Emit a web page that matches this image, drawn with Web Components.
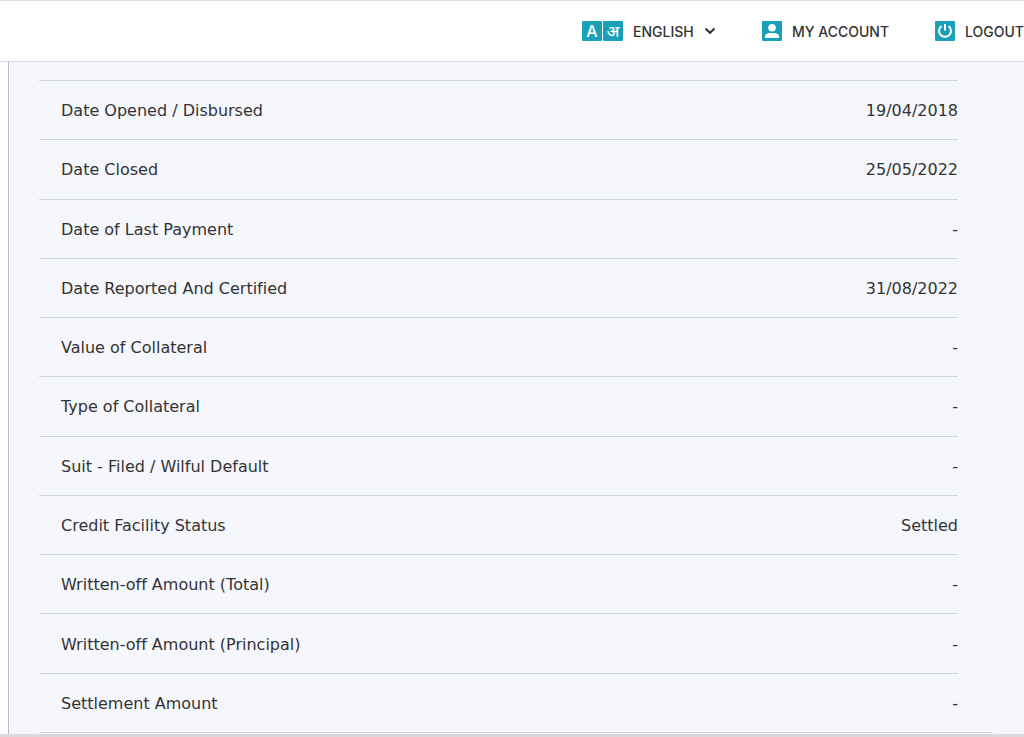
<!DOCTYPE html>
<html lang="en">
<head>
<meta charset="UTF-8">
<meta name="viewport" content="width=device-width, initial-scale=1.0">
<title>Account details</title>
<style>
    body {
        margin: 0;
        background: #fff;
        color: #333;
        font-family: "DejaVu Sans", sans-serif;
        font-size: 16px;
        font-variant-ligatures: none;
    }
</style>
</head>
<body>
<report-page>
    <top-bar slot="header">
        <language-select></language-select>
        <nav-link href="#account" label="MY ACCOUNT">
            <svg slot="icon" viewBox="0 0 20 20" width="20" height="20" aria-hidden="true">
                <rect width="20" height="20" rx="1" fill="#1a9fb8"/>
                <circle cx="10" cy="6.800" r="3.800" fill="#fff"/>
                <path d="M3 17v-1.200c0-2.600 2.500-3.800 4.500-3.800h5c2 0 4.500 1.200 4.500 3.800V17z" fill="#fff"/>
            </svg>
        </nav-link>
        <nav-link href="#logout" label="LOGOUT">
            <svg slot="icon" viewBox="0 0 20 20" width="20" height="20" aria-hidden="true">
                <rect width="20" height="20" rx="1" fill="#1a9fb8"/>
                <path d="M6.500 5a6 6 0 1 0 7 0M10 3v6.500" fill="none" stroke="#fff" stroke-width="2"/>
            </svg>
        </nav-link>
    </top-bar>
    <account-details></account-details>
</report-page>

<script>
class ReportPage extends HTMLElement {
    constructor() {
        super();
        const shadow = this.attachShadow({ mode: 'open' });

        shadow.innerHTML = `
            <style>
                :host {
                    display: flex;
                    flex-direction: column;
                    box-sizing: border-box;
                    min-height: 100vh;
                    border-top: 1px solid #dcdcdc;
                    border-bottom: 3px solid #ddd8dc;
                }

                main {
                    flex: 1;
                    display: flex;
                    margin-left: 8px;
                    border-left: 1px solid #b9bccb;
                    background: #f5f7fd;
                }
            </style>
            <slot name="header"></slot>
            <main><slot></slot></main>
        `;
    }
}

class TopBar extends HTMLElement {
    constructor() {
        super();
        const shadow = this.attachShadow({ mode: 'open' });

        shadow.innerHTML = `
            <style>
                :host {
                    display: block;
                    background: #fff;
                    border-bottom: 1px solid #d3dbe9;
                    font: 500 14px/20px Inter, sans-serif;
                }

                nav {
                    display: flex;
                    justify-content: flex-end;
                    align-items: center;
                    gap: 46px;
                    height: 60px;
                }
            </style>
            <nav aria-label="Account"><slot></slot></nav>
        `;
    }
}

class LanguageSelect extends HTMLElement {
    constructor() {
        super();
        const shadow = this.attachShadow({ mode: 'open' });

        shadow.innerHTML = `
            <style>
                :host {
                    display: block;
                }

                label {
                    display: flex;
                    align-items: center;
                    gap: 10px;
                }

                .tiles {
                    display: flex;
                    gap: 1px;
                }

                .tiles span {
                    width: 20px;
                    height: 20px;
                    border-radius: 1px;
                    background: #1a9fb8;
                    color: #fff;
                    font: 500 16px/20px Inter, "Noto Sans", "Noto Sans Devanagari", sans-serif;
                    text-align: center;
                }

                select {
                    appearance: none;
                    margin: 0 -22px 0 0;
                    padding: 2px 22px 0 0;
                    border: 0;
                    background: none;
                    color: inherit;
                    font: inherit;
                }

                .chevron {
                    pointer-events: none;
                }
            </style>
            <label>
                <span class="tiles" aria-hidden="true"><span>A</span><span>अ</span></span>
                <select aria-label="Language"><option>ENGLISH</option></select>
                <svg class="chevron" viewBox="0 0 12 8" width="12" height="8" aria-hidden="true">
                    <path d="M1.500 1.500 6 5.800l4.500-4.300" fill="none" stroke="#333" stroke-width="2"/>
                </svg>
            </label>
        `;
    }
}

class NavLink extends HTMLElement {
    constructor() {
        super();
        const shadow = this.attachShadow({ mode: 'open' });

        shadow.innerHTML = `
            <style>
                :host {
                    display: block;
                }

                a {
                    display: flex;
                    align-items: center;
                    gap: 10px;
                    color: inherit;
                    text-decoration: none;
                    white-space: nowrap;
                }

                span {
                    padding-top: 2px;
                }
            </style>
            <a href="${this.getAttribute('href')}">
                <slot name="icon"></slot>
                <span>${this.getAttribute('label')}</span>
            </a>
        `;
    }
}

class AccountDetails extends HTMLElement {
    constructor() {
        super();
        const shadow = this.attachShadow({ mode: 'open' });

        const rows = [
            ['Date Opened / Disbursed', '19/04/2018'],
            ['Date Closed', '25/05/2022'],
            ['Date of Last Payment', '-'],
            ['Date Reported And Certified', '31/08/2022'],
            ['Value of Collateral', '-'],
            ['Type of Collateral', '-'],
            ['Suit - Filed / Wilful Default', '-'],
            ['Credit Facility Status', 'Settled'],
            ['Written-off Amount (Total)', '-'],
            ['Written-off Amount (Principal)', '-'],
            ['Settlement Amount', '-']
        ];

        shadow.innerHTML = `
            <style>
                :host {
                    flex: 1;
                    display: flex;
                    flex-direction: column;
                    margin: 18px 31px 1px 30px;
                    border-bottom: 1px solid #d0d6e3;
                }

                table {
                    flex: 1;
                    margin-right: 35px;
                    border-spacing: 0;
                }

                th, td {
                    height: 54px;
                    padding: 2px 0 0;
                    border-top: 1px solid #d0d6e3;
                    font-weight: normal;
                    line-height: 24px;
                }

                th {
                    padding-left: 22px;
                    text-align: left;
                }

                td {
                    text-align: right;
                }
            </style>
            <table>
                <tbody>
                    ${rows.map(([name, value]) => `<tr><th scope="row">${name}</th><td>${value}</td></tr>`).join('')}
                </tbody>
            </table>
        `;
    }
}

customElements.define('report-page', ReportPage);
customElements.define('top-bar', TopBar);
customElements.define('language-select', LanguageSelect);
customElements.define('nav-link', NavLink);
customElements.define('account-details', AccountDetails);
</script>
</body>
</html>
